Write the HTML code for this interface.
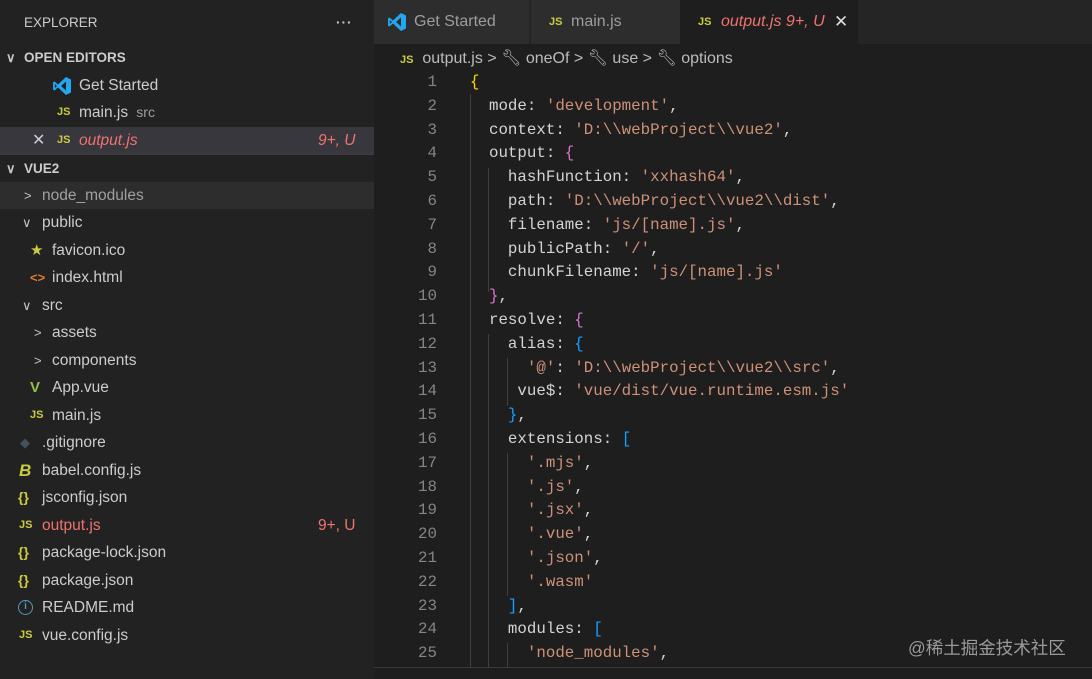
<!DOCTYPE html>
<html><head><meta charset="utf-8"><style>
*{margin:0;padding:0;box-sizing:border-box}
body{width:1092px;height:679px;background:#1e1e1e;overflow:hidden;position:relative;font-family:"Segoe UI","Liberation Sans",sans-serif;color:#cccccc}
#side{position:absolute;left:0;top:0;width:374px;height:679px;background:#222222}
.r{position:absolute;left:0;width:374px;height:27px;line-height:27px;font-size:15.5px;white-space:nowrap;color:#cccccc}
.r span{position:absolute}
.h{font-weight:bold;font-size:13.5px}
.js{color:#cbcb41;font-weight:bold;font-size:11px;font-family:"Liberation Sans",sans-serif}
.br{color:#cbcb41;font-weight:bold;font-size:14px}
.red{color:#f0736e}
.chev{color:#c5c5c5;font-size:13px}
#tabs{position:absolute;left:374px;top:0;width:718px;height:44px;background:#252526}
.tab{position:absolute;top:0;height:44px;line-height:44px;font-size:16px;color:#9d9d9d}
#ed{position:absolute;left:374px;top:44px;width:718px;height:623px;background:#1e1e1e}
.ln{position:absolute;left:0;width:63px;text-align:right;font-family:"Liberation Mono",monospace;font-size:15.8px;color:#858585}
.cd{position:absolute;font-family:"Liberation Mono",monospace;font-size:15.8px;color:#d4d4d4;white-space:pre}
.s{color:#ce9178}.y{color:#ffd700}.p{color:#da70d6}.b{color:#179fff}
.g{position:absolute;width:1px;background:#404040}
</style></head><body>
<div id="side">
<div class="r" style="top:9px;font-size:13.5px"><span style="left:24px">EXPLORER</span><span style="left:336px;font-weight:bold;letter-spacing:1px">···</span></div>
<div class="r h" style="top:44px"><span class="chev" style="left:6px">∨</span><span style="left:24px">OPEN EDITORS</span></div>
<div class="r" style="top:72px"><span style="left:52px;top:0"><svg width="20" height="20" viewBox="0 0 20 20" style="vertical-align:middle"><path d="M14 1 L19 3.5 V16.5 L14 19 L6 11.5 L2.5 14.5 L1 13.5 V6.5 L2.5 5.5 L6 8.5 Z M14 5.5 L9 10 L14 14.5 Z M2.8 8 V12 L5 10 Z" fill="#23a7f2" fill-rule="evenodd"/></svg></span><span style="left:79px">Get Started</span></div>
<div class="r" style="top:99px"><span class="js" style="left:57px">JS</span><span style="left:79px">main.js <span style="position:static;color:#9d9d9d;font-size:14px">&nbsp;src</span></span></div>
<div class="r" style="top:127px;background:#37373d"><span style="left:32px;font-size:16px">✕</span><span class="js" style="left:57px">JS</span><span class="red" style="left:79px;font-style:italic">output.js</span><span class="red" style="left:318px;font-style:italic">9+, U</span></div>
<div style="position:absolute;left:0;top:154px;width:374px;height:1px;background:#3c3c3c"></div>
<div class="r h" style="top:155px"><span class="chev" style="left:6px">∨</span><span style="left:24px">VUE2</span></div>
<div class="r" style="top:182px;background:#2d2d2e"><span class="chev" style="left:24px">&gt;</span><span style="left:42px;color:#a0a0a0">node_modules</span></div>
<div class="r" style="top:209px"><span class="chev" style="left:22px">∨</span><span style="left:42px">public</span></div>
<div class="r" style="top:237px"><span style="left:30px;color:#cbcb41;font-size:15px">★</span><span style="left:52px">favicon.ico</span></div>
<div class="r" style="top:264px"><span style="left:30px;color:#e37933;font-size:13px;font-weight:bold">&lt;&gt;</span><span style="left:52px">index.html</span></div>
<div class="r" style="top:292px"><span class="chev" style="left:22px">∨</span><span style="left:42px">src</span></div>
<div class="r" style="top:319px"><span class="chev" style="left:34px">&gt;</span><span style="left:52px">assets</span></div>
<div class="r" style="top:347px"><span class="chev" style="left:34px">&gt;</span><span style="left:52px">components</span></div>
<div class="r" style="top:374px"><span style="left:30px;color:#8dc149;font-weight:bold;font-size:15px">V</span><span style="left:52px">App.vue</span></div>
<div class="r" style="top:402px"><span class="js" style="left:30px">JS</span><span style="left:52px">main.js</span></div>
<div class="r" style="top:429px"><span style="left:20px;color:#41535b;font-size:13px">◆</span><span style="left:42px">.gitignore</span></div>
<div class="r" style="top:457px"><span style="left:19px;color:#cbcb41;font-style:italic;font-weight:bold;font-size:17px">B</span><span style="left:42px">babel.config.js</span></div>
<div class="r" style="top:484px"><span class="br" style="left:18px">{}</span><span style="left:42px">jsconfig.json</span></div>
<div class="r" style="top:512px"><span class="js" style="left:19px">JS</span><span class="red" style="left:42px">output.js</span><span class="red" style="left:318px">9+, U</span></div>
<div class="r" style="top:539px"><span class="br" style="left:18px">{}</span><span style="left:42px">package-lock.json</span></div>
<div class="r" style="top:567px"><span class="br" style="left:18px">{}</span><span style="left:42px">package.json</span></div>
<div class="r" style="top:594px"><span style="left:18px;top:6px;width:15px;height:15px;border:1.5px solid #519aba;border-radius:50%;color:#519aba;font-size:10px;line-height:12px;text-align:center;font-weight:bold">i</span><span style="left:42px">README.md</span></div>
<div class="r" style="top:622px"><span class="js" style="left:19px">JS</span><span style="left:42px">vue.config.js</span></div>
</div>
<div id="tabs">
<div class="tab" style="left:0;width:156px;border-right:1px solid #252526;background:#2d2d2d"><svg width="20" height="20" viewBox="0 0 20 20" style="position:absolute;left:13px;top:12px"><path d="M14 1 L19 3.5 V16.5 L14 19 L6 11.5 L2.5 14.5 L1 13.5 V6.5 L2.5 5.5 L6 8.5 Z M14 5.5 L9 10 L14 14.5 Z M2.8 8 V12 L5 10 Z" fill="#23a7f2" fill-rule="evenodd"/></svg><span style="position:absolute;left:40px">Get Started</span></div>
<div class="tab" style="left:157px;width:149px;background:#2d2d2d"><span class="js" style="position:absolute;left:18px">JS</span><span style="position:absolute;left:40px">main.js</span></div>
<div class="tab" style="left:306px;width:178px;background:#1e1e1e"><span class="js" style="position:absolute;left:18px">JS</span><span class="red" style="position:absolute;left:41px;font-style:italic">output.js 9+, U</span><span style="position:absolute;left:154px;color:#ddd;font-size:17px">✕</span></div>
</div>
<div id="ed">
<div style="position:absolute;top:3px;left:26px;height:24px;line-height:24px;font-size:16px;color:#bbb;white-space:nowrap"><span class="js">JS</span>&nbsp; output.js &gt; 🔧︎ oneOf &gt; 🔧︎ use &gt; 🔧︎ options</div>
<div class="g" style="left:96px;top:50px;height:573px"></div>
<div class="g" style="left:114px;top:124px;height:124px"></div>
<div class="g" style="left:114px;top:290px;height:333px"></div>
<div class="g" style="left:133px;top:314px;height:48px"></div>
<div class="g" style="left:133px;top:409px;height:143px"></div>
<div class="g" style="left:133px;top:599px;height:24px"></div>
<div id="code"></div>
</div>
<div style="position:absolute;left:374px;top:667px;width:718px;height:1px;background:#3a3a3a"></div>
<div style="position:absolute;left:908px;top:635px;font-size:17.5px;color:#9a9a9a;font-family:'Liberation Sans','Noto Sans CJK SC',sans-serif">@稀土掘金技术社区</div>
<script>
const L=[
'<span class="y">{</span>',
'  mode: <span class="s">\'development\'</span>,',
'  context: <span class="s">\'D:\\\\webProject\\\\vue2\'</span>,',
'  output: <span class="p">{</span>',
'    hashFunction: <span class="s">\'xxhash64\'</span>,',
'    path: <span class="s">\'D:\\\\webProject\\\\vue2\\\\dist\'</span>,',
'    filename: <span class="s">\'js/[name].js\'</span>,',
'    publicPath: <span class="s">\'/\'</span>,',
'    chunkFilename: <span class="s">\'js/[name].js\'</span>',
'  <span class="p">}</span>,',
'  resolve: <span class="p">{</span>',
'    alias: <span class="b">{</span>',
'      <span class="s">\'@\'</span>: <span class="s">\'D:\\\\webProject\\\\vue2\\\\src\'</span>,',
'     vue$: <span class="s">\'vue/dist/vue.runtime.esm.js\'</span>',
'    <span class="b">}</span>,',
'    extensions: <span class="b">[</span>',
'      <span class="s">\'.mjs\'</span>,',
'      <span class="s">\'.js\'</span>,',
'      <span class="s">\'.jsx\'</span>,',
'      <span class="s">\'.vue\'</span>,',
'      <span class="s">\'.json\'</span>,',
'      <span class="s">\'.wasm\'</span>',
'    <span class="b">]</span>,',
'    modules: <span class="b">[</span>',
'      <span class="s">\'node_modules\'</span>,'];
let h='';
L.forEach((t,i)=>{const y=29+i*23.8;h+=`<div class="ln" style="top:${y}px">${i+1}</div><div class="cd" style="top:${y}px;left:96px">${t}</div>`;});
document.getElementById('code').innerHTML=h;
</script>
</body></html>
